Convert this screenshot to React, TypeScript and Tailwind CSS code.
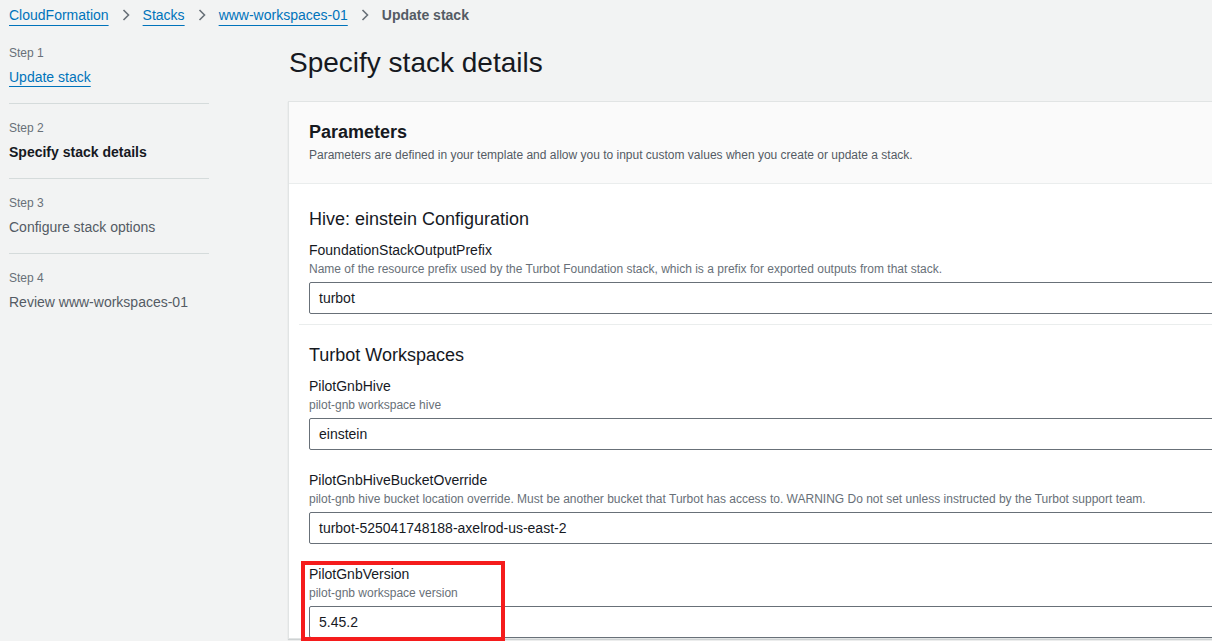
import React from 'react';

interface Step {
  num: number;
  label: string;
  state: 'link' | 'current' | 'todo';
}

interface Field {
  name: string;
  description: string;
  value: string;
  highlight?: boolean;
}

const steps: Step[] = [
  { num: 1, label: 'Update stack', state: 'link' },
  { num: 2, label: 'Specify stack details', state: 'current' },
  { num: 3, label: 'Configure stack options', state: 'todo' },
  { num: 4, label: 'Review www-workspaces-01', state: 'todo' },
];

const workspaceFields: Field[] = [
  { name: 'PilotGnbHive', description: 'pilot-gnb workspace hive', value: 'einstein' },
  {
    name: 'PilotGnbHiveBucketOverride',
    description:
      'pilot-gnb hive bucket location override. Must be another bucket that Turbot has access to. WARNING Do not set unless instructed by the Turbot support team.',
    value: 'turbot-525041748188-axelrod-us-east-2',
  },
  { name: 'PilotGnbVersion', description: 'pilot-gnb workspace version', value: '5.45.2', highlight: true },
];

const Chevron = () => (
  <svg width="8" height="12" viewBox="0 0 8 12" className="mx-[13px] shrink-0">
    <path d="M1.5 1 L6.5 6 L1.5 11" fill="none" stroke="#687078" strokeWidth="1.6" />
  </svg>
);

const Crumb: React.FC<{ children: React.ReactNode }> = ({ children }) => (
  <span className="text-[#0073bb] underline underline-offset-[5px] decoration-1">{children}</span>
);

const ParamField: React.FC<{ field: Field }> = ({ field }) => (
  <div className="relative">
    <div className="text-[14px] leading-[20px] text-[#16191f]">{field.name}</div>
    <div className="mt-[1px] text-[12px] leading-[16px] text-[#687078] whitespace-nowrap">{field.description}</div>
    <div className="mt-[5px] h-[32px] w-full rounded-[2px] border border-[#687078] bg-white pl-[9px] text-[14px] leading-[30px] text-[#16191f]">
      {field.value}
    </div>
    {field.highlight && (
      <div className="absolute left-[-8px] top-[-3px] h-[80px] w-[204px] border-[4px] border-[#f51c1c]" />
    )}
  </div>
);

export default function App() {
  return (
    <div className="h-[641px] w-[1212px] overflow-hidden bg-[#f2f3f3] font-['Liberation_Sans',Arial,sans-serif]">
      <nav className="flex h-[28px] items-center pl-[9px] pt-[1px] text-[14px] leading-[20px]">
        <Crumb>CloudFormation</Crumb>
        <Chevron />
        <Crumb>Stacks</Crumb>
        <Chevron />
        <Crumb>www-workspaces-01</Crumb>
        <Chevron />
        <span className="font-bold text-[#545b64]">Update stack</span>
      </nav>

      <div className="flex">
        <aside className="ml-[9px] w-[200px] shrink-0">
          {steps.map((s, i) => (
            <div
              key={s.num}
              className={`${i === 0 ? 'pt-[17px]' : 'pt-[16px]'} pb-[16px] ${
                i < steps.length - 1 ? 'border-b border-[#d5dbdb]' : ''
              }`}
            >
              <div className="text-[12px] leading-[16px] text-[#687078]">Step {s.num}</div>
              <div
                className={`mt-[6px] text-[14px] leading-[20px] whitespace-nowrap ${
                  s.state === 'link'
                    ? 'text-[#0073bb] underline underline-offset-[4px] decoration-1'
                    : s.state === 'current'
                    ? 'font-bold text-[#16191f]'
                    : 'text-[#545b64]'
                }`}
              >
                {s.label}
              </div>
            </div>
          ))}
        </aside>

        <main className="ml-[79px] w-[1000px] shrink-0">
          <h1 className="mt-[17px] pl-[1px] text-[28px] leading-[36px] text-[#16191f]">Specify stack details</h1>

          <section className="mt-[20px] border border-[#e1e4e4] bg-white shadow-[0_1px_1px_0_rgba(0,28,36,0.15)]">
            <header className="border-b border-[#eaeded] bg-[#fafafa] px-[20px] pt-[18px] pb-[20px]">
              <h2 className="text-[18px] font-bold leading-[24px] text-[#16191f]">Parameters</h2>
              <p className="mt-[3px] text-[12px] leading-[16px] text-[#545b64]">
                Parameters are defined in your template and allow you to input custom values when you create or update a stack.
              </p>
            </header>

            <div className="px-[10px]">
              <div className="border-b border-[#eaeded] px-[10px] pt-[23px] pb-[10px]">
                <h3 className="text-[18px] leading-[24px] text-[#16191f]">Hive: einstein Configuration</h3>
                <div className="mt-[9px]">
                  <ParamField
                    field={{
                      name: 'FoundationStackOutputPrefix',
                      description:
                        'Name of the resource prefix used by the Turbot Foundation stack, which is a prefix for exported outputs from that stack.',
                      value: 'turbot',
                    }}
                  />
                </div>
              </div>

              <div className="px-[10px] pt-[18px]">
                <h3 className="text-[18px] leading-[24px] text-[#16191f]">Turbot Workspaces</h3>
                <div className="mt-[9px] flex flex-col gap-[20px]">
                  {workspaceFields.map((f) => (
                    <ParamField key={f.name} field={f} />
                  ))}
                </div>
              </div>
            </div>
          </section>
        </main>
      </div>
    </div>
  );
}
